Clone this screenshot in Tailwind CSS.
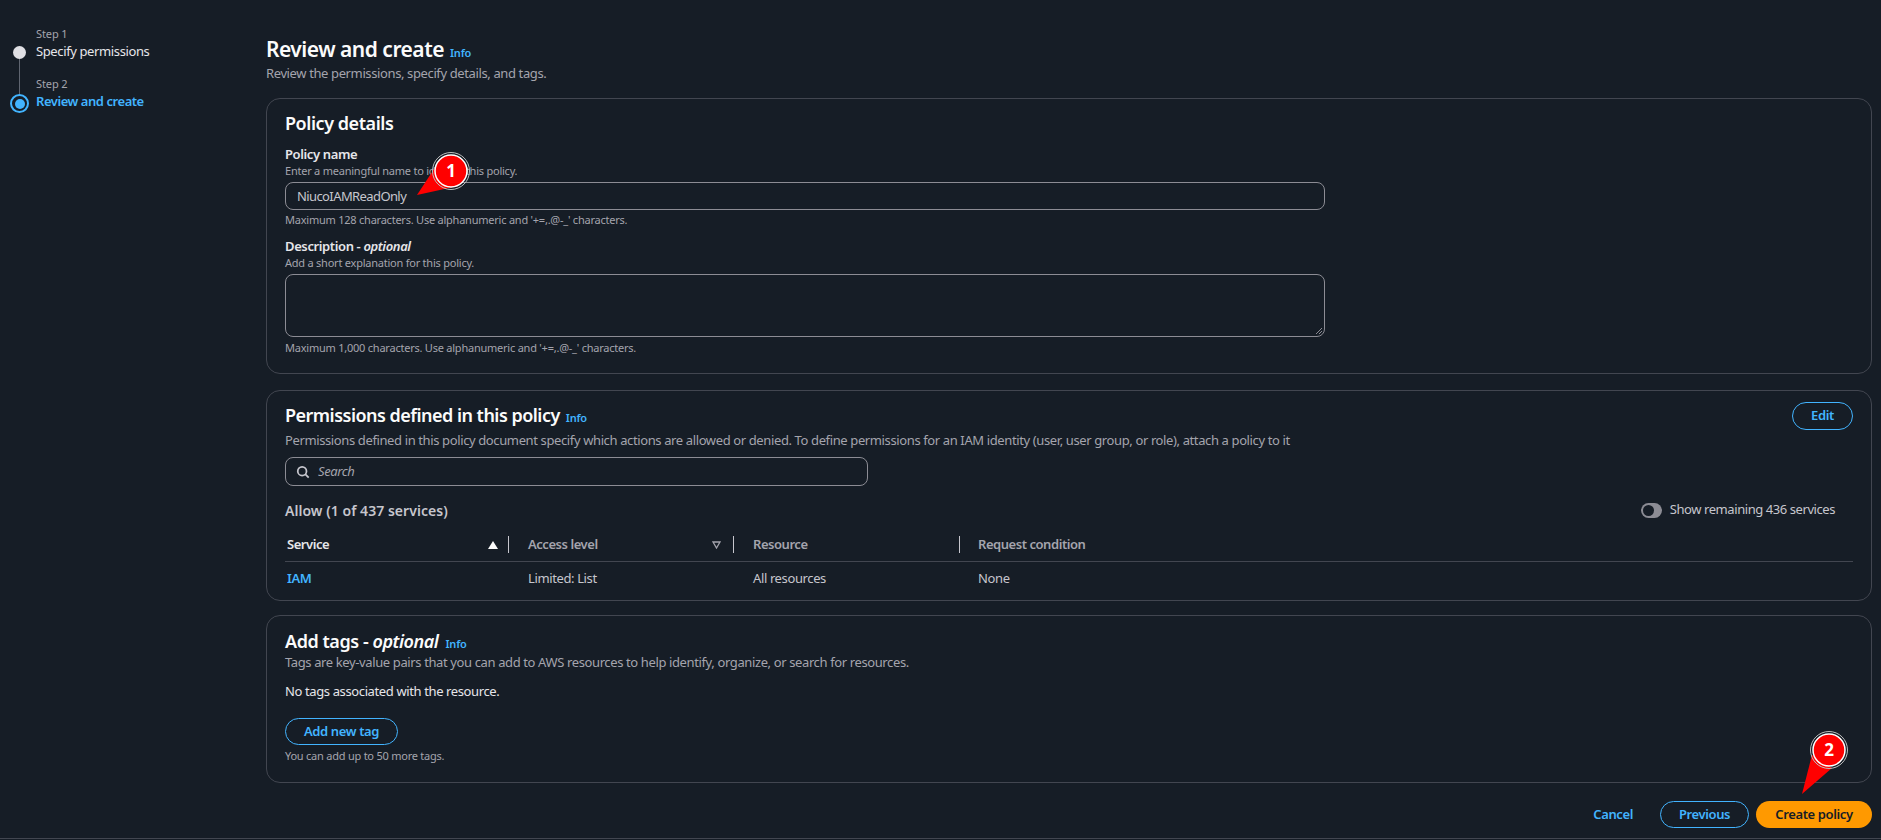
<!DOCTYPE html>
<html lang="en">
<head>
<meta charset="UTF-8">
<title>Review and create</title>
<script src="https://cdn.jsdelivr.net/npm/@tailwindcss/browser@4"></script>
</head>
<body class="bg-[#161d26] font-['Noto_Sans',sans-serif] text-[#c6c6cd] tracking-[-0.38px] h-[840px] overflow-hidden relative">

<div class="flex h-[839px] border-b border-[#424650]">
  <!-- Steps -->
  <nav class="w-[266px] shrink-0 pl-[36px] pt-[27px] relative">
    <div class="text-[11px] leading-[14px] tracking-[-0.1px] text-[#a4a4ad]">Step 1</div>
    <div class="mt-[1px] text-[13px] leading-[18px] text-[#e6e6ea]">Specify permissions</div>
    <div class="text-[11px] leading-[14px] tracking-[-0.1px] text-[#a4a4ad] mt-[17px]">Step 2</div>
    <div class="mt-[1px] text-[13px] leading-[18px] tracking-[-0.45px] font-semibold text-[#42b4ff]">Review and create</div>
    <span class="absolute left-[13px] top-[46px] w-[13px] h-[13px] rounded-full bg-[#e0e0e4]"></span>
    <span class="absolute left-[19px] top-[59px] w-px h-[36px] bg-[#5f6570]"></span>
    <span class="absolute left-[10px] top-[94px] w-[19px] h-[19px] rounded-full border-2 border-[#42b4ff] flex items-center justify-center"><span class="w-[10px] h-[10px] rounded-full bg-[#42b4ff]"></span></span>
  </nav>

  <main class="flex-1 pr-[9px]">
    <div class="h-[98px] pt-[36px]">
      <div class="flex items-baseline gap-[6px]">
        <h1 class="text-[21px] leading-[26px] tracking-[-0.5px] font-semibold text-[#fbfbfb]">Review and create</h1>
        <a class="text-[11px] font-semibold tracking-[-0.2px] text-[#42b4ff]">Info</a>
      </div>
      <p class="mt-[2px] text-[13px] leading-[18px] text-[#a4a4ad]">Review the permissions, specify details, and tags.</p>
    </div>

    <!-- Policy details -->
    <section class="h-[276px] border border-[#424650] rounded-[14px] px-[18px] pt-[12px]">
      <h2 class="text-[18px] leading-[24px] tracking-[-0.45px] font-semibold text-[#fbfbfb]">Policy details</h2>
      <div class="mt-[11px] text-[13px] leading-[16px] font-semibold text-[#e6e6ea]">Policy name</div>
      <div class="mt-[1px] text-[11px] leading-[15px] tracking-[-0.23px] text-[#a4a4ad]">Enter a meaningful name to identify this policy.</div>
      <div class="mt-[4px] w-[1040px] h-[28px] border border-[#8c8c94] rounded-[8px] pl-[11px] text-[13px] tracking-[-0.6px] leading-[26px]">NiucoIAMReadOnly</div>
      <div class="mt-[2px] text-[11px] leading-[15px] tracking-[-0.23px] text-[#a4a4ad]">Maximum 128 characters. Use alphanumeric and '+=,.@-_' characters.</div>
      <div class="mt-[11px] text-[13px] leading-[16px] font-semibold text-[#e6e6ea]">Description - <i>optional</i></div>
      <div class="mt-[1px] text-[11px] leading-[15px] tracking-[-0.23px] text-[#a4a4ad]">Add a short explanation for this policy.</div>
      <div class="mt-[4px] w-[1040px] h-[63px] border border-[#8c8c94] rounded-[8px] relative">
        <svg class="absolute right-[1px] bottom-[1px]" width="9" height="9" viewBox="0 0 9 9"><path d="M8 2 2 8M8 5 5 8" stroke="#8c8c94" fill="none"/></svg>
      </div>
      <div class="mt-[3px] text-[11px] leading-[15px] tracking-[-0.23px] text-[#a4a4ad]">Maximum 1,000 characters. Use alphanumeric and '+=,.@-_' characters.</div>
    </section>

    <!-- Permissions -->
    <section class="mt-[16px] h-[211px] border border-[#424650] rounded-[14px] px-[18px] pt-[12px] relative">
      <div class="flex items-baseline gap-[6px]">
        <h2 class="text-[18px] leading-[24px] tracking-[-0.52px] font-semibold text-[#fbfbfb]">Permissions defined in this policy</h2>
        <a class="text-[11px] font-semibold tracking-[-0.2px] text-[#42b4ff]">Info</a>
      </div>
      <p class="mt-[4px] text-[13px] leading-[18px] text-[#a4a4ad]">Permissions defined in this policy document specify which actions are allowed or denied. To define permissions for an IAM identity (user, user group, or role), attach a policy to it</p>
      <div class="mt-[8px] w-[583px] h-[29px] border border-[#8c8c94] rounded-[8px] flex items-center pl-[10px] gap-[8px]">
        <svg width="14" height="14" viewBox="0 0 16 16" fill="none" stroke="#c6c6cd" stroke-width="2"><circle cx="7" cy="7" r="5"/><path d="m10.500 10.500 4 4"/></svg>
        <span class="text-[13px] italic text-[#a4a4ad]">Search</span>
      </div>
      <div class="mt-[14px] flex items-center justify-between h-[20px]">
        <div class="text-[14px] tracking-[0.04px] font-semibold text-[#c6c6cd]">Allow (1 of 437 services)</div>
        <div class="flex items-center gap-[8px] pr-[18px]">
          <span class="w-[21px] h-[15px] rounded-full bg-[#8c8c94] pl-[2px] flex items-center"><span class="w-[11px] h-[11px] rounded-full bg-[#161d26]"></span></span>
          <span class="text-[13px] tracking-[-0.43px] text-[#c6c6cd]">Show remaining 436 services</span>
        </div>
      </div>
      <div class="mt-[12px] h-[30px] border-b border-[#424650] grid grid-cols-[224px_225px_226px_1fr] text-[13px] tracking-[-0.45px] font-semibold items-center pb-[3px]">
        <div class="flex items-center h-[20px] pl-[2px] text-[#e6e6ea] relative">Service
          <svg class="absolute left-[203px] top-[6px]" width="10" height="8" viewBox="0 0 10 8"><path d="M5 0 10 8H0z" fill="#fbfbfb"/></svg>
          <span class="absolute right-0 top-[1px] w-px h-[17px] bg-[#c6c6cd]"></span>
        </div>
        <div class="flex items-center h-[20px] pl-[19px] text-[#a4a4ad] relative">Access level
          <svg class="absolute left-[203px] top-[6px]" width="9" height="8" viewBox="0 0 9 8"><path d="M1 1h7L4.500 7z" fill="none" stroke="#a4a4ad" stroke-width="1.300"/></svg>
          <span class="absolute right-0 top-[1px] w-px h-[17px] bg-[#c6c6cd]"></span>
        </div>
        <div class="flex items-center h-[20px] pl-[19px] text-[#a4a4ad] relative">Resource
          <span class="absolute right-0 top-[1px] w-px h-[17px] bg-[#c6c6cd]"></span>
        </div>
        <div class="flex items-center h-[20px] pl-[18px] text-[#a4a4ad]">Request condition</div>
      </div>
      <div class="h-[34px] grid grid-cols-[224px_225px_226px_1fr] text-[13px] items-center">
        <div class="pl-[2px] font-semibold text-[#42b4ff]">IAM</div>
        <div class="pl-[19px]">Limited: List</div>
        <div class="pl-[19px]">All resources</div>
        <div class="pl-[18px]">None</div>
      </div>
      <a class="absolute right-[18px] top-[11px] w-[61px] h-[28px] border border-[#42b4ff] rounded-full flex items-center justify-center text-[13px] font-semibold text-[#42b4ff]">Edit</a>
    </section>

    <!-- Tags -->
    <section class="mt-[14px] h-[168px] border border-[#424650] rounded-[14px] px-[18px] pt-[13px]">
      <div class="flex items-baseline gap-[7px]">
        <h2 class="text-[18px] leading-[24px] tracking-[-0.45px] font-semibold text-[#fbfbfb]">Add tags - <i>optional</i></h2>
        <a class="text-[11px] font-semibold tracking-[-0.2px] text-[#42b4ff]">Info</a>
      </div>
      <p class="mt-[1px] text-[13px] leading-[16px] text-[#a4a4ad]">Tags are key-value pairs that you can add to AWS resources to help identify, organize, or search for resources.</p>
      <p class="mt-[13px] text-[13px] leading-[16px] text-[#e6e6ea]">No tags associated with the resource.</p>
      <a class="mt-[19px] w-[113px] h-[27px] border border-[#42b4ff] rounded-full flex items-center justify-center text-[13px] font-semibold text-[#42b4ff]">Add new tag</a>
      <p class="mt-[3px] text-[11px] leading-[15px] tracking-[-0.23px] text-[#a4a4ad]">You can add up to 50 more tags.</p>
    </section>

    <!-- Actions -->
    <div class="mt-[18px] flex justify-end items-center text-[13px] font-semibold">
      <a class="text-[#42b4ff] mr-[27px]">Cancel</a>
      <a class="w-[89px] h-[27px] border border-[#42b4ff] rounded-full flex items-center justify-center text-[#42b4ff] mr-[7px]">Previous</a>
      <a class="w-[116px] h-[27px] bg-[#ff9900] rounded-full flex items-center justify-center text-[#161d26]">Create policy</a>
    </div>
  </main>
</div>

<!-- Callouts -->
<svg class="absolute left-0 top-0 pointer-events-none" width="1881" height="840" viewBox="0 0 1881 840">
  <path d="M417 195 436 166 458 186z" fill="#ff0000"/>
  <circle cx="451" cy="171" r="18.500" fill="none" stroke="#bdbdbd"/>
  <circle cx="451" cy="171" r="16" fill="#ff0000" stroke="#ffffff" stroke-width="1.500"/>
  <path d="M1802 794 1812 755 1832 768z" fill="#ff0000"/>
  <circle cx="1829" cy="750" r="18.500" fill="none" stroke="#bdbdbd"/>
  <circle cx="1829" cy="750" r="16" fill="#ff0000" stroke="#ffffff" stroke-width="1.500"/>
  <text x="451" y="177" text-anchor="middle" font-family="Noto Sans" font-weight="700" font-size="17" fill="#fff">1</text>
  <text x="1829" y="756" text-anchor="middle" font-family="Noto Sans" font-weight="700" font-size="17" fill="#fff">2</text>
</svg>
</body>
</html>
